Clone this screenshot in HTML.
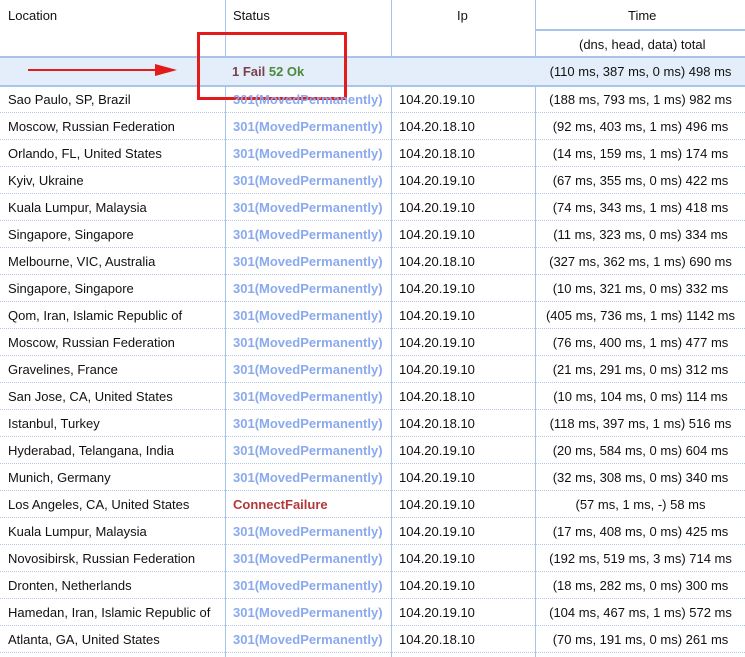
<!DOCTYPE html><html><head><style>
body{margin:0;width:745px;height:657px;overflow:hidden;background:#fff;font-family:"Liberation Sans",sans-serif;font-size:13px;color:#111;position:relative}
.v{position:absolute;top:0;height:657px;width:1px;background:#a9c4ea}
.r{position:absolute;left:0;width:745px;height:27px;border-bottom:1px dotted #b4c8e6;box-sizing:border-box}
.r span{position:absolute;top:6px;white-space:nowrap}
.a{left:8px}.b{left:233px;font-weight:bold;color:#8aa9ef}.c{left:399px}.d{left:536px;width:209px;text-align:center}
.f{color:#b03a3a!important}
</style></head><body>
<div class="v" style="left:225px"></div><div class="v" style="left:391px"></div><div class="v" style="left:535px"></div>
<div style="position:absolute;left:0;top:58px;width:745px;height:28px;background:#e4eefb"></div>
<div style="position:absolute;left:0;top:56px;width:745px;height:2px;background:#a9c4ea"></div>
<div style="position:absolute;left:0;top:85px;width:745px;height:2px;background:#a9c4ea"></div>
<div style="position:absolute;left:536px;top:29px;width:209px;height:2px;background:#a9c4ea"></div>
<span style="position:absolute;left:8px;top:8px">Location</span>
<span style="position:absolute;left:233px;top:8px">Status</span>
<span style="position:absolute;left:457px;top:8px">Ip</span>
<span style="position:absolute;left:628px;top:8px">Time</span>
<span style="position:absolute;left:579px;top:37px">(dns, head, data) total</span>
<span style="position:absolute;left:232px;top:64px;font-weight:bold;color:#7a3f4a">1 Fail <span style="color:#4c8a3a">52 Ok</span></span>
<span style="position:absolute;left:536px;width:209px;text-align:center;top:64px">(110 ms, 387 ms, 0 ms) 498 ms</span>
<div style="position:absolute;left:28px;top:69px;width:135px;height:2px;background:#e31b1b"></div>
<svg style="position:absolute;left:155px;top:63px" width="24" height="14"><polygon points="0,1 22,7 0,13" fill="#e31b1b"/></svg>
<div style="position:absolute;left:197px;top:32px;width:150px;height:68px;border:3px solid #e31b1b;box-sizing:border-box"></div>
<div style="position:absolute;left:0;top:86px">
<div class="r" style="top:0"><span class="a">Sao Paulo, SP, Brazil</span><span class="b">301(MovedPermanently)</span><span class="c">104.20.19.10</span><span class="d">(188 ms, 793 ms, 1 ms) 982 ms</span></div>
<div class="r" style="top:27px"><span class="a">Moscow, Russian Federation</span><span class="b">301(MovedPermanently)</span><span class="c">104.20.18.10</span><span class="d">(92 ms, 403 ms, 1 ms) 496 ms</span></div>
<div class="r" style="top:54px"><span class="a">Orlando, FL, United States</span><span class="b">301(MovedPermanently)</span><span class="c">104.20.18.10</span><span class="d">(14 ms, 159 ms, 1 ms) 174 ms</span></div>
<div class="r" style="top:81px"><span class="a">Kyiv, Ukraine</span><span class="b">301(MovedPermanently)</span><span class="c">104.20.19.10</span><span class="d">(67 ms, 355 ms, 0 ms) 422 ms</span></div>
<div class="r" style="top:108px"><span class="a">Kuala Lumpur, Malaysia</span><span class="b">301(MovedPermanently)</span><span class="c">104.20.19.10</span><span class="d">(74 ms, 343 ms, 1 ms) 418 ms</span></div>
<div class="r" style="top:135px"><span class="a">Singapore, Singapore</span><span class="b">301(MovedPermanently)</span><span class="c">104.20.19.10</span><span class="d">(11 ms, 323 ms, 0 ms) 334 ms</span></div>
<div class="r" style="top:162px"><span class="a">Melbourne, VIC, Australia</span><span class="b">301(MovedPermanently)</span><span class="c">104.20.18.10</span><span class="d">(327 ms, 362 ms, 1 ms) 690 ms</span></div>
<div class="r" style="top:189px"><span class="a">Singapore, Singapore</span><span class="b">301(MovedPermanently)</span><span class="c">104.20.19.10</span><span class="d">(10 ms, 321 ms, 0 ms) 332 ms</span></div>
<div class="r" style="top:216px"><span class="a">Qom, Iran, Islamic Republic of</span><span class="b">301(MovedPermanently)</span><span class="c">104.20.19.10</span><span class="d">(405 ms, 736 ms, 1 ms) 1142 ms</span></div>
<div class="r" style="top:243px"><span class="a">Moscow, Russian Federation</span><span class="b">301(MovedPermanently)</span><span class="c">104.20.19.10</span><span class="d">(76 ms, 400 ms, 1 ms) 477 ms</span></div>
<div class="r" style="top:270px"><span class="a">Gravelines, France</span><span class="b">301(MovedPermanently)</span><span class="c">104.20.19.10</span><span class="d">(21 ms, 291 ms, 0 ms) 312 ms</span></div>
<div class="r" style="top:297px"><span class="a">San Jose, CA, United States</span><span class="b">301(MovedPermanently)</span><span class="c">104.20.18.10</span><span class="d">(10 ms, 104 ms, 0 ms) 114 ms</span></div>
<div class="r" style="top:324px"><span class="a">Istanbul, Turkey</span><span class="b">301(MovedPermanently)</span><span class="c">104.20.18.10</span><span class="d">(118 ms, 397 ms, 1 ms) 516 ms</span></div>
<div class="r" style="top:351px"><span class="a">Hyderabad, Telangana, India</span><span class="b">301(MovedPermanently)</span><span class="c">104.20.19.10</span><span class="d">(20 ms, 584 ms, 0 ms) 604 ms</span></div>
<div class="r" style="top:378px"><span class="a">Munich, Germany</span><span class="b">301(MovedPermanently)</span><span class="c">104.20.19.10</span><span class="d">(32 ms, 308 ms, 0 ms) 340 ms</span></div>
<div class="r" style="top:405px"><span class="a">Los Angeles, CA, United States</span><span class="b f">ConnectFailure</span><span class="c">104.20.19.10</span><span class="d">(57 ms, 1 ms, -) 58 ms</span></div>
<div class="r" style="top:432px"><span class="a">Kuala Lumpur, Malaysia</span><span class="b">301(MovedPermanently)</span><span class="c">104.20.19.10</span><span class="d">(17 ms, 408 ms, 0 ms) 425 ms</span></div>
<div class="r" style="top:459px"><span class="a">Novosibirsk, Russian Federation</span><span class="b">301(MovedPermanently)</span><span class="c">104.20.19.10</span><span class="d">(192 ms, 519 ms, 3 ms) 714 ms</span></div>
<div class="r" style="top:486px"><span class="a">Dronten, Netherlands</span><span class="b">301(MovedPermanently)</span><span class="c">104.20.19.10</span><span class="d">(18 ms, 282 ms, 0 ms) 300 ms</span></div>
<div class="r" style="top:513px"><span class="a">Hamedan, Iran, Islamic Republic of</span><span class="b">301(MovedPermanently)</span><span class="c">104.20.19.10</span><span class="d">(104 ms, 467 ms, 1 ms) 572 ms</span></div>
<div class="r" style="top:540px"><span class="a">Atlanta, GA, United States</span><span class="b">301(MovedPermanently)</span><span class="c">104.20.18.10</span><span class="d">(70 ms, 191 ms, 0 ms) 261 ms</span></div>
</div>
</body></html>
